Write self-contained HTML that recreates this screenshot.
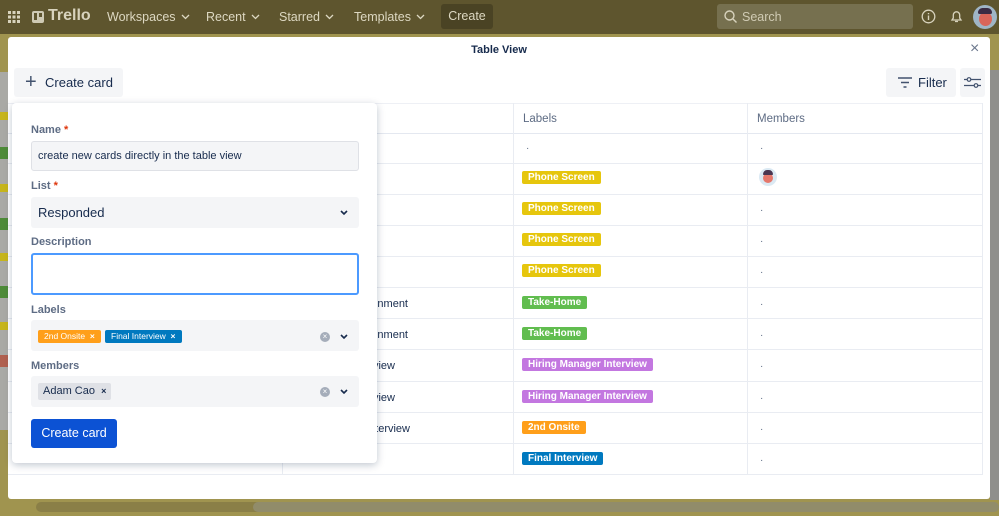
<!DOCTYPE html>
<html><head><meta charset="utf-8"><style>
*{box-sizing:border-box;margin:0;padding:0}
body{width:999px;height:516px;overflow:hidden;position:relative;background:#a0944f;font-family:"Liberation Sans",sans-serif;color:#172b4d}
.abs{position:absolute}
.top{left:0;top:0;width:999px;height:34px;background:#5e552e;color:#e6e2cf;font-size:13px}
.nav{top:10px;font-size:12.5px;color:#ddd8c2}
.nav svg{margin-left:5px;vertical-align:1px}
.modal{left:8px;top:37px;width:982px;height:462px;background:#fff;border-radius:3px}
.btn{background:#f4f5f7;border-radius:3px}
.cell{font-size:11px;color:#172b4d}
.lab{position:absolute;height:13px;line-height:13px;padding:0 6px;border-radius:2px;color:#fff;font-weight:bold;font-size:10px}
.pop{left:12px;top:103px;width:365px;height:360px;background:#fff;border-radius:4px;box-shadow:0 2px 8px rgba(9,30,66,.25)}
.fl{position:absolute;left:19px;font-size:11px;color:#5e6c84;font-weight:bold}
.fl b{color:#de350b}
.inp{position:absolute;left:19px;width:328px;background:#f4f5f7;border-radius:3px}
.dot{position:absolute;font-size:10px;color:#5e6c84}
</style></head><body>
<div class="abs top">
 <svg class="abs" style="left:8px;top:11px" width="12" height="12"><g fill="#d8d3bd"><rect x="0" y="0" width="3" height="3"/><rect x="4.5" y="0" width="3" height="3"/><rect x="9" y="0" width="3" height="3"/><rect x="0" y="4.5" width="3" height="3"/><rect x="4.5" y="4.5" width="3" height="3"/><rect x="9" y="4.5" width="3" height="3"/><rect x="0" y="9" width="3" height="3"/><rect x="4.5" y="9" width="3" height="3"/><rect x="9" y="9" width="3" height="3"/></g></svg>
 <div class="abs" style="left:32px;top:11px;width:12px;height:12px;background:#cfcab4;border-radius:2px"><div class="abs" style="left:2px;top:2px;width:3px;height:7px;background:#5e552e"></div><div class="abs" style="left:7px;top:2px;width:3px;height:4px;background:#5e552e"></div></div>
 <div class="abs" style="left:48px;top:7px;font-size:16px;font-weight:bold;color:#d8d3bd">Trello</div>
 <div class="abs nav" style="left:107px">Workspaces<svg width="9" height="6"><path d="M1 1l3.5 3.5L8 1" stroke="#ddd8c2" stroke-width="1.3" fill="none"/></svg></div>
 <div class="abs nav" style="left:206px">Recent<svg width="9" height="6"><path d="M1 1l3.5 3.5L8 1" stroke="#ddd8c2" stroke-width="1.3" fill="none"/></svg></div>
 <div class="abs nav" style="left:279px">Starred<svg width="9" height="6"><path d="M1 1l3.5 3.5L8 1" stroke="#ddd8c2" stroke-width="1.3" fill="none"/></svg></div>
 <div class="abs nav" style="left:354px">Templates<svg width="9" height="6"><path d="M1 1l3.5 3.5L8 1" stroke="#ddd8c2" stroke-width="1.3" fill="none"/></svg></div>
 <div class="abs" style="left:441px;top:4px;width:52px;height:25px;background:#4a4324;border-radius:3px;color:#ddd8c2;font-size:12.5px;line-height:25px;text-align:center">Create</div>
 <div class="abs" style="left:717px;top:4px;width:196px;height:25px;background:#76704f;border-radius:3px"></div>
 <svg class="abs" style="left:724px;top:10px" width="13" height="13"><circle cx="5.5" cy="5.5" r="4.5" stroke="#d8d3bd" stroke-width="1.4" fill="none"/><path d="M9 9l3.5 3.5" stroke="#d8d3bd" stroke-width="1.4"/></svg>
 <div class="abs" style="left:742px;top:10px;font-size:12.5px;color:#d0cbb4">Search</div>
 <svg class="abs" style="left:921px;top:9px" width="15" height="15"><circle cx="7.5" cy="7.5" r="6.3" stroke="#d8d3bd" stroke-width="1.3" fill="none"/><path d="M7.5 6.5v4.5M7.5 4v1.2" stroke="#d8d3bd" stroke-width="1.4"/></svg>
 <svg class="abs" style="left:950px;top:9px" width="13" height="15"><path d="M2 11h9l-1.3-2V6a3.2 3.2 0 0 0-6.4 0v3z M5 12.5h3" stroke="#d8d3bd" stroke-width="1.3" fill="none"/></svg>
 <div class="abs" style="left:973px;top:5px;width:24px;height:24px;border-radius:50%;background:#9fb5c6"><div class="abs" style="left:6px;top:7px;width:13px;height:14px;border-radius:50%;background:#d9655a"></div><div class="abs" style="left:5px;top:3px;width:14px;height:6px;border-radius:6px 6px 2px 2px;background:#3a2b44"></div></div>
</div>
<div class="abs" style="left:0;top:72px;width:8px;height:358px;background:#a9a9a5"></div>
<div class="abs" style="left:0;top:112px;width:8px;height:8px;background:#c6b51c"></div>
<div class="abs" style="left:0;top:147px;width:8px;height:12px;background:#4e8b38"></div>
<div class="abs" style="left:0;top:184px;width:8px;height:8px;background:#c6b51c"></div>
<div class="abs" style="left:0;top:218px;width:8px;height:12px;background:#4e8b38"></div>
<div class="abs" style="left:0;top:253px;width:8px;height:8px;background:#c6b51c"></div>
<div class="abs" style="left:0;top:286px;width:8px;height:12px;background:#4e8b38"></div>
<div class="abs" style="left:0;top:322px;width:8px;height:8px;background:#c6b51c"></div>
<div class="abs" style="left:0;top:355px;width:8px;height:12px;background:#b0604f"></div>
<div class="abs" style="left:990px;top:70px;width:9px;height:430px;background:#8f8f8c"></div>
<div class="abs" style="left:36px;top:502px;width:950px;height:10px;border-radius:5px;background:#8a7f47"></div>
<div class="abs" style="left:253px;top:502px;width:746px;height:10px;border-radius:5px;background:#918c6a"></div>

<div class="abs modal">
 <div class="abs" style="left:0;top:7px;width:982px;text-align:center;font-size:11px;font-weight:bold">Table View</div>
 <div class="abs" style="left:962px;top:3px;font-size:16px;color:#6b778c">×</div>
 <div class="abs btn" style="left:6px;top:31px;width:109px;height:29px"></div>
 <div class="abs" style="left:17px;top:34px;font-size:20px;color:#42526e;font-weight:300">+</div>
 <div class="abs" style="left:37px;top:38px;font-size:13px;color:#172b4d">Create card</div>
 <div class="abs btn" style="left:878px;top:31px;width:70px;height:29px"></div>
 <svg class="abs" style="left:890px;top:40px" width="14" height="11"><path d="M0 1h14M3 5.5h8M5.5 10h3" stroke="#42526e" stroke-width="1.5"/></svg>
 <div class="abs" style="left:910px;top:38px;font-size:13px;color:#172b4d">Filter</div>
 <div class="abs btn" style="left:952px;top:31px;width:25px;height:29px"></div>
 <svg class="abs" style="left:956px;top:40px" width="17" height="11"><path d="M0 2.5h17M0 8.5h17" stroke="#42526e" stroke-width="1.3"/><circle cx="5" cy="2.5" r="1.8" fill="#f4f5f7" stroke="#42526e" stroke-width="1.2"/><circle cx="12" cy="8.5" r="1.8" fill="#f4f5f7" stroke="#42526e" stroke-width="1.2"/></svg>
 <div class="abs" style="left:0;top:66px;width:974px;height:1px;background:#eef0f5"></div>
 <div class="abs" style="left:0;top:96px;width:974px;height:1px;background:#e4e8f0"></div>
 <div class="abs" style="left:0;top:126px;width:974px;height:1px;background:#e9ecf2"></div>
 <div class="abs" style="left:0;top:157px;width:974px;height:1px;background:#e9ecf2"></div>
 <div class="abs" style="left:0;top:188px;width:974px;height:1px;background:#e9ecf2"></div>
 <div class="abs" style="left:0;top:219px;width:974px;height:1px;background:#e9ecf2"></div>
 <div class="abs" style="left:0;top:250px;width:974px;height:1px;background:#e9ecf2"></div>
 <div class="abs" style="left:0;top:281px;width:974px;height:1px;background:#e9ecf2"></div>
 <div class="abs" style="left:0;top:312px;width:974px;height:1px;background:#e9ecf2"></div>
 <div class="abs" style="left:0;top:344px;width:974px;height:1px;background:#e9ecf2"></div>
 <div class="abs" style="left:0;top:375px;width:974px;height:1px;background:#e9ecf2"></div>
 <div class="abs" style="left:0;top:406px;width:974px;height:1px;background:#e9ecf2"></div>
 <div class="abs" style="left:0;top:437px;width:974px;height:1px;background:#e9ecf2"></div>
 <div class="abs" style="left:274px;top:66px;width:1px;height:372px;background:#e9ecf2"></div>
 <div class="abs" style="left:505px;top:66px;width:1px;height:372px;background:#e9ecf2"></div>
 <div class="abs" style="left:739px;top:66px;width:1px;height:372px;background:#e9ecf2"></div>
 <div class="abs" style="left:974px;top:66px;width:1px;height:372px;background:#e9ecf2"></div>
 <div class="abs" style="left:515px;top:76px;font-size:11.5px;color:#5e6c84">Labels</div>
 <div class="abs" style="left:749px;top:76px;font-size:11.5px;color:#5e6c84">Members</div>
 <div class="dot" style="left:518px;top:106px">·</div><div class="dot" style="left:752px;top:106px">·</div>
 <div class="lab" style="left:514px;top:134px;background:#e6c60d">Phone Screen</div>
 <div class="abs" style="left:751px;top:131px;width:18px;height:18px;border-radius:50%;background:#dbe9f3"><div class="abs" style="left:4px;top:5px;width:10px;height:10px;border-radius:50%;background:#e5776b"></div><div class="abs" style="left:4px;top:2px;width:10px;height:5px;border-radius:5px 5px 1px 1px;background:#4a3550"></div></div>
 <div class="lab" style="left:514px;top:165px;background:#e6c60d">Phone Screen</div>
 <div class="lab" style="left:514px;top:196px;background:#e6c60d">Phone Screen</div>
 <div class="lab" style="left:514px;top:227px;background:#e6c60d">Phone Screen</div>
 <div class="lab" style="left:514px;top:259px;background:#61bd4f">Take-Home</div>
 <div class="lab" style="left:514px;top:290px;background:#61bd4f">Take-Home</div>
 <div class="lab" style="left:514px;top:321px;background:#c377e0">Hiring Manager Interview</div>
 <div class="lab" style="left:514px;top:353px;background:#c377e0">Hiring Manager Interview</div>
 <div class="lab" style="left:514px;top:384px;background:#ff9f1a">2nd Onsite</div>
 <div class="lab" style="left:514px;top:415px;background:#0079bf">Final Interview</div>
 <div class="dot" style="left:752px;top:168px">·</div><div class="dot" style="left:752px;top:199px">·</div><div class="dot" style="left:752px;top:230px">·</div><div class="dot" style="left:752px;top:262px">·</div><div class="dot" style="left:752px;top:293px">·</div><div class="dot" style="left:752px;top:324px">·</div><div class="dot" style="left:752px;top:356px">·</div><div class="dot" style="left:752px;top:387px">·</div><div class="dot" style="left:752px;top:418px">·</div>
 <div class="abs cell" style="right:582px;top:261px">Take-Home Assignment</div>
 <div class="abs cell" style="right:582px;top:292px">Take-Home Assignment</div>
 <div class="abs cell" style="right:595px;top:323px">Manager Interview</div>
 <div class="abs cell" style="right:595px;top:355px">Manager Interview</div>
 <div class="abs cell" style="right:580px;top:386px">Onsite Interview</div>
 <div class="abs cell" style="left:280px;top:417px">Final Interview</div>
 <div class="abs cell" style="left:34px;top:417px">Linkedout</div>
</div>

<div class="abs pop">
 <div class="fl" style="top:21px">Name <b>*</b></div>
 <div class="inp" style="top:38px;height:30px;border:1px solid #dfe1e6;padding:8px 6px;font-size:11px;color:#172b4d">create new cards directly in the table view</div>
 <div class="fl" style="top:77px">List <b>*</b></div>
 <div class="inp" style="top:94px;height:31px;padding:8px 7px;font-size:13px">Responded<svg style="position:absolute;right:11px;top:13px" width="8" height="6"><path d="M1 1l3 3 3-3" stroke="#172b4d" stroke-width="1.6" fill="none"/></svg></div>
 <div class="fl" style="top:133px">Description</div>
 <div class="inp" style="top:150px;height:42px;background:#fff;border:2px solid #4c9aff"></div>
 <div class="fl" style="top:201px">Labels</div>
 <div class="inp" style="top:217px;height:31px"></div>
 <div class="lab" style="left:26px;top:227px;height:13px;line-height:13px;background:#ff9f1a;font-weight:normal;font-size:8.5px">2nd Onsite&nbsp;&nbsp;<b>×</b></div>
 <div class="lab" style="left:93px;top:227px;height:13px;line-height:13px;background:#0079bf;font-weight:normal;font-size:8.5px">Final Interview&nbsp;&nbsp;<b>×</b></div>
 <div class="abs" style="left:308px;top:229px;width:10px;height:10px;border-radius:50%;background:#a5adba;color:#fff;font-size:8px;line-height:10px;text-align:center">×</div>
 <svg class="abs" style="left:328px;top:231px" width="8" height="6"><path d="M1 1l3 3 3-3" stroke="#172b4d" stroke-width="1.6" fill="none"/></svg>
 <div class="fl" style="top:257px">Members</div>
 <div class="inp" style="top:273px;height:31px"></div>
 <div class="abs" style="left:26px;top:280px;width:73px;height:17px;background:#dfe1e6;border-radius:2px;font-size:11px;line-height:17px;padding-left:5px;color:#172b4d">Adam Cao&nbsp;&nbsp;<b style="font-size:9px">×</b></div>
 <div class="abs" style="left:308px;top:284px;width:10px;height:10px;border-radius:50%;background:#a5adba;color:#fff;font-size:8px;line-height:10px;text-align:center">×</div>
 <svg class="abs" style="left:328px;top:286px" width="8" height="6"><path d="M1 1l3 3 3-3" stroke="#172b4d" stroke-width="1.6" fill="none"/></svg>
 <div class="abs" style="left:19px;top:316px;width:86px;height:29px;background:#0c52d4;border-radius:3px;color:#fff;font-size:12.5px;line-height:29px;text-align:center">Create card</div>
</div>
</body></html>
